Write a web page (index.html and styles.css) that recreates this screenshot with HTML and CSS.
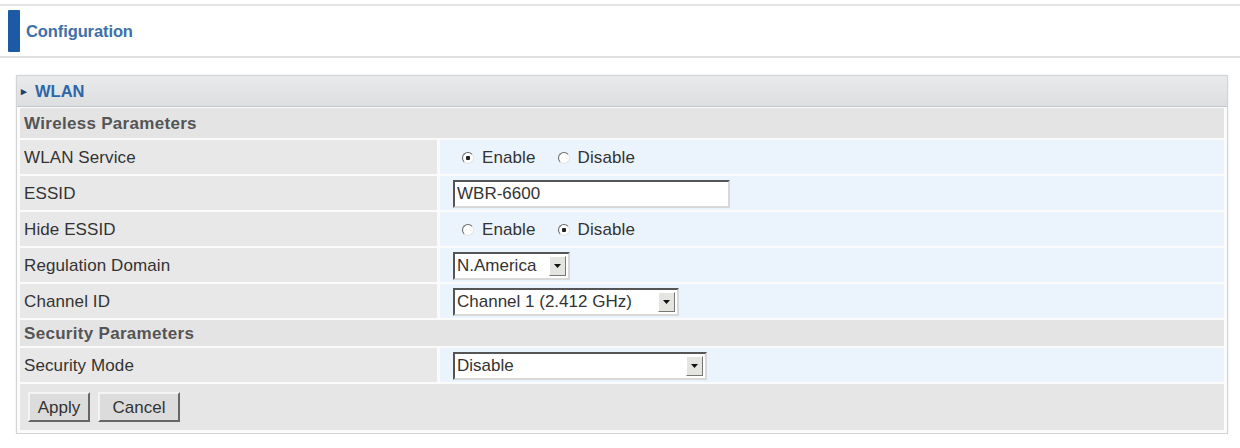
FILE: index.html
```html
<!DOCTYPE html>
<html>
<head>
<meta charset="utf-8">
<link rel="stylesheet" href="styles.css">
</head>
<body>
<div class="topline"></div>
<header class="page-head">
  <span class="head-bar"></span>
  <span class="head-title">Configuration</span>
</header>
<section class="panel">
  <div class="panel-head"><span class="tri">&#9656;</span>WLAN</div>
  <div class="grid">
    <div class="section">Wireless Parameters</div>

    <div class="label">WLAN Service</div>
    <div class="value">
      <label class="radio"><input type="radio" name="svc" checked> Enable</label>
      <label class="radio"><input type="radio" name="svc"> Disable</label>
    </div>

    <div class="label">ESSID</div>
    <div class="value"><input class="text" type="text" value="WBR-6600"></div>

    <div class="label">Hide ESSID</div>
    <div class="value">
      <label class="radio"><input type="radio" name="hide"> Enable</label>
      <label class="radio"><input type="radio" name="hide" checked> Disable</label>
    </div>

    <div class="label">Regulation Domain</div>
    <div class="value">
      <span class="select w-reg"><span class="sel-text">N.America</span><span class="sel-btn"><svg width="7" height="4" viewBox="0 0 7 4"><path d="M0 0H7L3.5 4Z" fill="#111"/></svg></span></span>
    </div>

    <div class="label">Channel ID</div>
    <div class="value">
      <span class="select w-ch"><span class="sel-text">Channel 1 (2.412 GHz)</span><span class="sel-btn"><svg width="7" height="4" viewBox="0 0 7 4"><path d="M0 0H7L3.5 4Z" fill="#111"/></svg></span></span>
    </div>

    <div class="section short">Security Parameters</div>

    <div class="label">Security Mode</div>
    <div class="value">
      <span class="select w-sec"><span class="sel-text">Disable</span><span class="sel-btn"><svg width="7" height="4" viewBox="0 0 7 4"><path d="M0 0H7L3.5 4Z" fill="#111"/></svg></span></span>
    </div>

    <div class="actions">
      <button class="btn w-apply">Apply</button>
      <button class="btn w-cancel">Cancel</button>
    </div>
  </div>
</section>
</body>
</html>
```
FILE: styles.css
```css
html, body {
  margin: 0;
  padding: 0;
  background: #ffffff;
  font-family: "Liberation Sans", Arial, sans-serif;
  color: #333333;
}

.topline {
  height: 0;
  margin-top: 4px;
  border-top: 2px solid #e4e4e4;
}

.page-head {
  display: flex;
  align-items: center;
  height: 50px;
  padding-left: 8px;
  border-bottom: 2px solid #e0e0e0;
}

.head-bar {
  width: 12px;
  height: 42px;
  background: #1c5aa6;
  border-radius: 1px;
}

.head-title {
  margin-left: 6px;
  font-size: 16.5px;
  font-weight: bold;
  color: #3c70a8;
  letter-spacing: -0.1px;
}

.panel {
  margin: 17px 12px 0 16px;
  border: 1px solid #d2d4d6;
  box-shadow: 0 0 2px #e4e6e8;
  background: #fbfbfb;
  padding-bottom: 3px;
}

.panel-head {
  height: 30px;
  display: flex;
  align-items: center;
  padding-left: 4px;
  font-size: 16.5px;
  font-weight: bold;
  color: #2e66a8;
  background: linear-gradient(#e8eaec, #dcdee0);
  border-bottom: 1px solid #c4c8cc;
}

.tri {
  font-size: 11px;
  color: #1f3f66;
  margin-right: 8px;
}

.grid {
  display: grid;
  grid-template-columns: 417px 1fr;
  column-gap: 3px;
  row-gap: 2px;
  padding: 1px 3px 0 3px;
}

.section {
  grid-column: 1 / 3;
  box-sizing: border-box;
  height: 30px;
  display: flex;
  align-items: center;
  padding: 2px 0 0 4px;
  background: #e4e4e4;
  font-size: 17px;
  font-weight: bold;
  color: #555555;
  letter-spacing: 0.3px;
}

.section.short {
  height: 26px;
}

.label {
  box-sizing: border-box;
  height: 34px;
  display: flex;
  align-items: center;
  padding: 2px 0 0 4px;
  background: #e8e8e8;
  font-size: 17px;
  color: #333333;
  letter-spacing: 0.1px;
}

.value {
  height: 34px;
  display: flex;
  align-items: center;
  padding-left: 13px;
  background: #ebf4fc;
  font-size: 17px;
  color: #333333;
}

.radio {
  display: inline-flex;
  align-items: center;
  margin: 2px 13px 0 9px;
  letter-spacing: 0.1px;
}

.radio input {
  appearance: none;
  -webkit-appearance: none;
  width: 12px;
  height: 12px;
  margin: 0 8px 0 0;
  border-radius: 50%;
  border: 1px solid;
  border-color: #666666 #e4e4e4 #e4e4e4 #666666;
  background: #ffffff;
}

.radio input:checked {
  background: radial-gradient(circle, #222 0 2px, #fff 2.5px);
}

.text {
  width: 271px;
  height: 24px;
  margin: 1px 0 0 0;
  padding: 0 0 0 2px;
  border: 2px solid;
  border-color: #555555 #d8d8d8 #d8d8d8 #555555;
  font-family: "Liberation Sans", Arial, sans-serif;
  font-size: 17px;
  color: #333333;
  background: #ffffff;
}

.select {
  display: inline-flex;
  align-items: center;
  height: 24px;
  margin-top: 1px;
  border: 2px solid;
  border-color: #555555 #d8d8d8 #d8d8d8 #555555;
  background: #ffffff;
  font-size: 17px;
  color: #333333;
  box-sizing: content-box;
}

.sel-text {
  flex: 1;
  padding-left: 2px;
  white-space: nowrap;
  overflow: hidden;
}

.sel-btn {
  flex: none;
  width: 15px;
  height: 18px;
  margin-right: 2px;
  display: flex;
  align-items: center;
  justify-content: center;
  background: #e4e4e0;
  border: 1px solid;
  border-color: #ffffff #777777 #777777 #ffffff;
}

.w-reg { width: 113px; }
.w-ch { width: 222px; }
.w-sec { width: 250px; }

.actions {
  grid-column: 1 / 3;
  height: 46px;
  display: flex;
  align-items: center;
  gap: 8px;
  padding-left: 8px;
  background: #e6e6e6;
}

.btn {
  height: 30px;
  padding: 2px 0 0 0;
  font-family: "Liberation Sans", Arial, sans-serif;
  font-size: 17px;
  color: #333333;
  background: #dcdcdc;
  border: 2px solid;
  border-color: #f4f4f4 #666666 #666666 #f4f4f4;
}

.w-apply { width: 62px; }
.w-cancel { width: 82px; }
```
